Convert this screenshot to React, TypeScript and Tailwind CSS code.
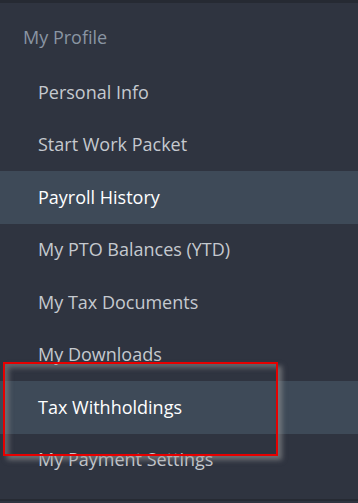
const items = [
  'Personal Info',
  'Start Work Packet',
  'Payroll History',
  'My PTO Balances (YTD)',
  'My Tax Documents',
  'My Downloads',
  'Tax Withholdings',
  'My Payment Settings',
]

const activeItems = ['Payroll History', 'Tax Withholdings']

export default function App() {
  return (
    <div className="relative w-[358px] h-[503px] overflow-hidden bg-[#2f3440] font-['Open_Sans',sans-serif]">
      <div className="h-[3px] bg-[#262a33]" />

      {/* Section title */}
      <div className="h-[63px] flex items-center pl-[23px] pt-[5px] text-[18px] text-[#8a95a3]">My Profile</div>

      {/* Menu */}
      <nav className="flex flex-col">
        {items.map(item => {
          const active = activeItems.includes(item)
          return (
            <div
              key={item}
              className={`h-[52.5px] flex items-center pl-[38px] text-[18px] ${
                active ? 'bg-[#3e4a58] text-white' : 'text-[#c5c9cf]'
              }`}
            >
              {item}
            </div>
          )
        })}
      </nav>

      <div className="mt-[13px] h-[2px] bg-[#262a33]" />

      {/* Annotation box */}
      <div className="absolute left-[3px] top-[362px] w-[275px] h-[94px] border-2 border-[#e60000] shadow-[4px_4px_5px_rgba(150,150,150,0.6),inset_4px_4px_5px_rgba(150,150,150,0.5)]" />
    </div>
  )
}
